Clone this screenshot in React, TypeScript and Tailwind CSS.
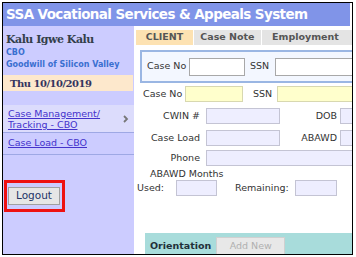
import React from "react";

const sans = { fontFamily: '"DejaVu Sans", Verdana, sans-serif' };
const serif = { fontFamily: '"DejaVu Serif", Georgia, serif' };

function Label({ w, children, right }: { w: number; children: React.ReactNode; right?: boolean }) {
  return (
    <span
      className={`shrink-0 whitespace-nowrap text-[9.5px] text-[#333] ${right ? "text-right" : ""}`}
      style={{ width: w }}
    >
      {children}
    </span>
  );
}

export default function App() {
  return (
    <div className="w-[356px] h-[257px] bg-white overflow-hidden" style={sans}>
      <div className="ml-[2px] mt-[2px] w-[351px] h-[253px] border border-black flex flex-col overflow-hidden bg-white">
        <div className="h-[23px] mr-[2px] bg-[#8094e8] text-white font-bold text-[13.5px] tracking-[-0.6px] pl-[3px] flex items-center whitespace-nowrap shrink-0">
          SSA Vocational Services &amp; Appeals System
        </div>
        <div className="flex flex-1 min-h-0">
          <aside className="w-[131px] shrink-0 bg-[#ccccff] flex flex-col">
            <div
              className="pt-[8px] pl-[3px] text-[11px] leading-[12px] font-bold text-[#333f4a] tracking-[-0.5px] whitespace-nowrap"
              style={serif}
            >
              Kalu Igwe Kalu
            </div>
            <div className="mt-[1px] pl-[3px] text-[8px] leading-[12px] font-bold text-[#3a6fd0]">CBO</div>
            <div className="pl-[3px] text-[8px] leading-[12px] font-bold text-[#3a6fd0] whitespace-nowrap">
              Goodwill of Silicon Valley
            </div>
            <div
              className="mt-[4px] mr-[1px] h-[16px] bg-[#fde8cc] pl-[7px] flex items-center text-[10px] font-bold text-[#33335f] tracking-[-0.5px]"
              style={serif}
            >
              Thu 10/10/2019
            </div>
            <div className="mt-[14px] h-[28px] bg-[#dcdcfc] flex items-center border-b border-[#9ea8e4]">
              <div className="pl-[5px] text-[9.5px] leading-[11px] text-[#4433cc] underline flex-1">
                Case Management/
                <br />
                Tracking - CBO
              </div>
              <svg width="8" height="10" viewBox="0 0 8 10" className="mr-[4px]">
                <polyline points="2,2 5,5 2,8" fill="none" stroke="#777" strokeWidth="1.8" />
              </svg>
            </div>
            <div className="h-[22px] flex items-center border-b border-[#9ea8e4] pl-[5px]">
              <span className="text-[9.5px] text-[#4433cc] underline">Case Load - CBO</span>
            </div>
            <div className="mt-[25px] ml-[1px] w-[61px] h-[32px] border-[3px] border-[#ee1111]">
              <div className="ml-[1px] mt-[4px] w-[52px] h-[18px] bg-[#e6e6e6] border border-[#a0a0a0] flex items-center justify-center text-[10.5px] text-[#223366]">
                Logout
              </div>
            </div>
          </aside>

          <main className="flex-1 min-w-0 overflow-hidden flex flex-col">
            <div className="flex mt-[4px] ml-[2px] h-[15px] gap-[1px] text-[9.5px] font-bold text-[#555] shrink-0">
              <div className="w-[61px] bg-[#fde2b2] flex items-center justify-center">CLIENT</div>
              <div className="w-[72px] bg-[#e4e4e4] flex items-center justify-center">Case Note</div>
              <div className="w-[90px] shrink-0 bg-[#e4e4e4] flex items-center pl-[10px]">Employment</div>
            </div>

            <div className="mt-[5px] ml-[6px] w-[240px] shrink-0 h-[33px] border-2 border-[#9ab6e3] bg-[#f3f7ff] flex items-center pl-[5px]">
              <Label w={42}>Case No</Label>
              <div className="w-[56px] h-[18px] shrink-0 bg-white border border-[#a8a8a8]" />
              <div className="w-[5px] shrink-0" />
              <Label w={25}>SSN</Label>
              <div className="w-[100px] h-[18px] shrink-0 bg-white border border-[#a8a8a8]" />
            </div>

            <div className="mt-[3px] ml-[9px] flex items-center h-[16px] shrink-0">
              <Label w={42}>Case No</Label>
              <div className="w-[58px] h-[16px] shrink-0 bg-[#ffffcc] border border-[#d8d8b0]" />
              <div className="w-[10px] shrink-0" />
              <Label w={24}>SSN</Label>
              <div className="w-[100px] h-[16px] shrink-0 bg-[#ffffcc] border border-[#d8d8b0]" />
            </div>

            <div className="mt-[6px] flex items-center h-[16px] shrink-0">
              <Label w={66} right>CWIN #</Label>
              <div className="ml-[6px] w-[74px] h-[16px] shrink-0 bg-[#eeeeff] border border-[#c4c4d4]" />
              <Label w={57} right>DOB</Label>
              <div className="ml-[3px] w-[40px] h-[16px] shrink-0 bg-[#eeeeff] border border-[#c4c4d4]" />
            </div>

            <div className="mt-[6px] flex items-center h-[16px] shrink-0">
              <Label w={66} right>Case Load</Label>
              <div className="ml-[6px] w-[74px] h-[16px] shrink-0 bg-[#eeeeff] border border-[#c4c4d4]" />
              <Label w={57} right>ABAWD</Label>
              <div className="ml-[3px] w-[40px] h-[16px] shrink-0 bg-[#eeeeff] border border-[#c4c4d4]" />
            </div>

            <div className="mt-[4px] flex items-center h-[16px] shrink-0">
              <Label w={66} right>Phone</Label>
              <div className="ml-[6px] w-[160px] h-[16px] shrink-0 bg-[#eeeeff] border border-[#c4c4d4]" />
            </div>

            <div className="mt-[2px] ml-[16px] text-[9.5px] leading-[11px] text-[#333] whitespace-nowrap shrink-0">
              ABAWD Months
            </div>

            <div className="mt-[1px] ml-[3px] flex items-center h-[16px] shrink-0">
              <Label w={39}>Used:</Label>
              <div className="w-[41px] h-[16px] shrink-0 bg-[#eeeeff] border border-[#c4c4d4]" />
              <div className="w-[18px] shrink-0" />
              <Label w={60}>Remaining:</Label>
              <div className="w-[42px] h-[16px] shrink-0 bg-[#eeeeff] border border-[#c4c4d4]" />
            </div>

            <div className="mt-[37px] ml-[11px] flex-1 bg-[#a8dcdb] flex items-end pl-[5px]">
              <span className="text-[9.5px] font-bold text-[#22303a] mb-[1px]">Orientation</span>
              <div className="ml-[5px] w-[69px] h-[17px] bg-[#e8e8e8] border border-[#d0d0d0] border-b-0 flex items-center justify-center text-[9.5px] text-[#b0b0b0]">
                Add New
              </div>
            </div>
          </main>
        </div>
      </div>
    </div>
  );
}
